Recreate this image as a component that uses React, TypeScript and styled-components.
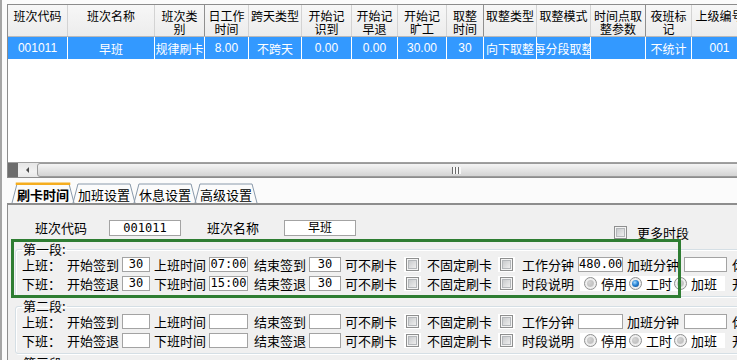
import React from 'react';
import styled, { createGlobalStyle } from 'styled-components';

const GlobalStyle = createGlobalStyle`
  html, body {
    margin: 0;
    padding: 0;
    background: #fbfbfb;
  }
  body {
    font-family: "Noto Sans CJK SC", "Noto Sans", sans-serif;
    font-size: 13px;
    color: #000;
  }
`;

const Window = styled.div`
  width: 737px;
  height: 360px;
  overflow: hidden;
  box-sizing: border-box;
  border-left: 2px solid #a5a5a5;
  padding: 4px 0 0 5px;
  background: #fbfbfb;
`;

const Content = styled.div`
  width: 830px;
`;

/* ---------- grid ---------- */

const Grid = styled.div`
  border: 1px solid #8c8c8c;
  background: #fff;
`;

const HeaderRow = styled.div`
  display: flex;
  height: 32px;
  box-sizing: border-box;
  background: linear-gradient(#f7f7f7, #ececec);
  border-bottom: 1px solid #b9b9b9;
`;

const HeaderCell = styled.div<{ $w: number; $strong?: boolean }>`
  flex: none;
  width: ${p => p.$w}px;
  box-sizing: border-box;
  border-right: 1px solid ${p => (p.$strong ? '#8f8f8f' : '#d3d3d3')};
  padding-top: 4px;
  font-size: 12px;
  line-height: 13px;
  text-align: center;
  white-space: pre-line;
  overflow: hidden;
`;

const DataRow = styled.div`
  display: flex;
  height: 22px;
  background: #3399ff;
  color: #fff;
`;

const DataCell = styled.div<{ $w: number }>`
  flex: none;
  width: ${p => p.$w}px;
  box-sizing: border-box;
  border-right: 1px solid #fff;
  display: flex;
  align-items: center;
  justify-content: center;
  overflow: hidden;
  white-space: nowrap;
  font-family: "Liberation Sans", "Noto Sans CJK SC", sans-serif;
  font-size: 12px;
`;

const GridBody = styled.div`
  height: 103px;
  background: #fff;
`;

const HScroll = styled.div`
  display: flex;
  height: 14px;
  border-top: 1px solid #a0a0a0;
  background: linear-gradient(#e6e6e6, #f1f1f1 60%, #e8e8e8);
  overflow: hidden;
`;

const ScrollCorner = styled.div`
  flex: none;
  width: 10px;
  background: #6d6d6d;
`;

const ScrollArrow = styled.div`
  flex: none;
  width: 19px;
  display: flex;
  align-items: center;
  justify-content: center;

  &::before {
    content: '';
    width: 0;
    height: 0;
    border-top: 3px solid transparent;
    border-bottom: 3px solid transparent;
    border-right: 3px solid #4a4a4a;
  }
`;

const ScrollThumb = styled.div`
  flex: none;
  width: 838px;
  box-sizing: border-box;
  border: 1px solid #9a9a9a;
  border-radius: 3px;
  background: linear-gradient(#f4f4f4, #e4e4e4 50%, #d3d3d3);
  display: flex;
  align-items: center;
  justify-content: center;
`;

const Grip = styled.span`
  width: 9px;
  height: 7px;
  background: repeating-linear-gradient(90deg, #6a6a6a 0 1px, #f8f8f8 1px 3px);
`;

/* ---------- tabs ---------- */

const TabStrip = styled.div`
  display: flex;
  height: 25px;
  box-sizing: border-box;
  padding: 5px 0 0 5px;
`;

const Tab = styled.div<{ $active?: boolean }>`
  position: relative;
  height: 20px;
  padding: 3px 5px 0;
  box-sizing: border-box;
  line-height: 17px;
  font-size: 13px;
  font-weight: ${p => (p.$active ? 700 : 400)};
  white-space: nowrap;

  & + & {
    margin-left: -1px;
  }

  svg {
    position: absolute;
    inset: 0;
    width: 100%;
    height: 100%;
    overflow: visible;
  }

  span {
    position: relative;
  }
`;

/* ---------- panel ---------- */

const Panel = styled.div`
  position: relative;
  height: 160px;
  border-top: 2px solid #8d8d8d;
  border-left: 1px solid #8d8d8d;
  background: #f0f0f0;
  padding-top: 15px;
`;

const TopRow = styled.div`
  display: flex;
  align-items: center;
  height: 16px;
  padding-left: 27px;
  white-space: nowrap;
`;

const Label = styled.span<{ $w?: number; $ml?: number }>`
  flex: none;
  width: ${p => (p.$w ? `${p.$w}px` : 'auto')};
  margin-left: ${p => p.$ml ?? 0}px;
  font-size: 13px;
  line-height: 16px;
  white-space: nowrap;
`;

const TextBox = styled.div<{ $w: number; $h?: number }>`
  flex: none;
  width: ${p => p.$w}px;
  height: ${p => p.$h ?? 15}px;
  box-sizing: border-box;
  border: 1px solid #a3a3a3;
  background: #fff;
  font-size: 12px;
  line-height: ${p => (p.$h ?? 15) - 2}px;
  text-align: center;
  overflow: hidden;
  white-space: nowrap;
  font-family: ${p => (p.$h ? '"DejaVu Sans Mono", "Noto Sans CJK SC", monospace' : '"DejaVu Sans Mono", monospace')};
`;

const CheckBox = styled.span`
  flex: none;
  position: relative;
  display: inline-block;
  width: 13px;
  height: 13px;
  box-sizing: border-box;
  border: 1px solid #8e8f8f;
  background: #f4f4f4;

  &::after {
    content: '';
    position: absolute;
    left: 1px;
    top: 1px;
    width: 9px;
    height: 9px;
    box-sizing: border-box;
    border: 1px solid #b4b7ba;
    background: linear-gradient(135deg, #c9cbcd, #eeeeee);
  }
`;

const CheckCell = styled.div`
  display: flex;
  align-items: center;
`;

const CheckBack = styled.span`
  display: inline-flex;
  align-items: center;
  padding: 1px 2px;
  background: #fff;
`;

const MoreOption = styled.label`
  display: flex;
  align-items: center;
  gap: 10px;
  margin-left: 258px;
  margin-top: 8px;
  font-size: 13px;
`;

const Segment = styled.fieldset`
  margin: 7px 0 0 7px;
  padding: 0 0 3px 6px;
  border: 1px solid #d5dfe5;
  border-radius: 3px;
  box-shadow: inset 1px 1px 0 #fff, 1px 1px 0 #fff;
  min-width: 0;

  & + & {
    margin-top: 3px;
  }

  legend {
    padding: 0 1px;
    font-size: 13px;
    line-height: 12px;
  }
`;

const SegmentRow = styled.div`
  display: grid;
  grid-template-columns: 45px 55px 32px 55px 45px 55px 36px 59px 23px 71px 24px 56px 49px 57px 48px 80px;
  height: 19px;
  align-items: center;
  white-space: nowrap;
`;

const RadioStrip = styled.div`
  grid-column: span 3;
  justify-self: start;
  width: 145px;
  height: 15px;
  margin-left: 2px;
  padding-left: 4px;
  box-sizing: border-box;
  background: #fff;
  display: flex;
  align-items: center;
  gap: 2px;
`;

const RadioItem = styled.span`
  display: inline-flex;
  align-items: center;
  gap: 4px;
  font-size: 13px;
  line-height: 15px;
`;

const Radio = styled.span<{ $checked?: boolean }>`
  position: relative;
  flex: none;
  width: 13px;
  height: 13px;
  box-sizing: border-box;
  border-radius: 50%;
  border: 1px solid #8e8f8f;
  background: radial-gradient(circle, #fdfdfd 0%, #e4e4e4 100%);

  &::after {
    content: '';
    position: absolute;
    left: 2px;
    top: 2px;
    width: 7px;
    height: 7px;
    border-radius: 50%;
    background: ${p =>
      p.$checked
        ? 'radial-gradient(circle at 40% 35%, #a9dcff 0%, #2a86d6 45%, #0c3f80 100%)'
        : 'radial-gradient(circle at 35% 35%, #d4d4d4 0%, #c2c2c2 60%, #e8e8e8 100%)'};
  }
`;

const Highlight = styled.div`
  position: absolute;
  left: 3px;
  top: 34px;
  width: 670px;
  height: 59px;
  box-sizing: border-box;
  border: 3px solid #2e7d32;
  pointer-events: none;
`;

type Column = { w: number; title: string; value: string; strong?: boolean };

const columns: Column[] = [
  { w: 60, title: '班次代码', value: '001011' },
  { w: 87, title: '班次名称', value: '早班' },
  { w: 50, title: '班次类\n别', value: '规律刷卡', strong: true },
  { w: 44, title: '日工作\n时间', value: '8.00' },
  { w: 53, title: '跨天类型', value: '不跨天' },
  { w: 50, title: '开始记\n识到', value: '0.00' },
  { w: 46, title: '开始记\n早退', value: '0.00' },
  { w: 49, title: '开始记\n旷工', value: '30.00' },
  { w: 37, title: '取整\n时间', value: '30', strong: true },
  { w: 53, title: '取整类型', value: '向下取整' },
  { w: 54, title: '取整模式', value: '每分段取整' },
  { w: 55, title: '时间点取\n整参数', value: '', strong: true },
  { w: 46, title: '夜班标\n记', value: '不统计' },
  { w: 56, title: '上级编号', value: '001' },
];

const tabs = ['刷卡时间', '加班设置', '休息设置', '高级设置'];

type SegmentData = {
  title: string;
  inStart: string;
  inTime: string;
  inEnd: string;
  outStart: string;
  outTime: string;
  outEnd: string;
  minutes: string;
  mode?: number;
};

const segments: SegmentData[] = [
  { title: '第一段:', inStart: '30', inTime: '07:00', inEnd: '30', outStart: '30', outTime: '15:00', outEnd: '30', minutes: '480.00', mode: 1 },
  { title: '第二段:', inStart: '', inTime: '', inEnd: '', outStart: '', outTime: '', outEnd: '', minutes: '' },
  { title: '第三段:', inStart: '', inTime: '', inEnd: '', outStart: '', outTime: '', outEnd: '', minutes: '' },
];

const TabShape: React.FC<{ active?: boolean }> = ({ active }) => (
  <svg viewBox="0 0 100 20" preserveAspectRatio="none">
    <polyline
      points="0,20 8,1 92,1 100,20"
      fill="none"
      stroke="#8a9aab"
      strokeWidth="1"
      vectorEffect="non-scaling-stroke"
    />
    {active && (
      <line x1="6" y1="0.8" x2="94" y2="0.8" stroke="#f5ad1f" strokeWidth="2.5" vectorEffect="non-scaling-stroke" />
    )}
  </svg>
);

const Check = () => (
  <CheckCell>
    <CheckBack>
      <CheckBox />
    </CheckBack>
  </CheckCell>
);

const SegmentBox: React.FC<{ data: SegmentData }> = ({ data }) => (
  <Segment>
    <legend>{data.title}</legend>
    <SegmentRow>
      <Label>上班：</Label>
      <Label>开始签到</Label>
      <TextBox $w={28}>{data.inStart}</TextBox>
      <Label>上班时间</Label>
      <TextBox $w={39}>{data.inTime}</TextBox>
      <Label>结束签到</Label>
      <TextBox $w={32}>{data.inEnd}</TextBox>
      <Label>可不刷卡</Label>
      <Check />
      <Label>不固定刷卡</Label>
      <Check />
      <Label>工作分钟</Label>
      <TextBox $w={45}>{data.minutes}</TextBox>
      <Label>加班分钟</Label>
      <TextBox $w={43} />
      <Label>休息分钟</Label>
    </SegmentRow>
    <SegmentRow>
      <Label>下班：</Label>
      <Label>开始签退</Label>
      <TextBox $w={28}>{data.outStart}</TextBox>
      <Label>下班时间</Label>
      <TextBox $w={39}>{data.outTime}</TextBox>
      <Label>结束签退</Label>
      <TextBox $w={32}>{data.outEnd}</TextBox>
      <Label>可不刷卡</Label>
      <Check />
      <Label>不固定刷卡</Label>
      <Check />
      <Label>时段说明</Label>
      <RadioStrip>
        {['停用', '工时', '加班'].map((t, i) => (
          <RadioItem key={t}>
            <Radio $checked={data.mode === i} />
            {t}
          </RadioItem>
        ))}
      </RadioStrip>
      <Label>开始时间</Label>
    </SegmentRow>
  </Segment>
);

export default function App() {
  return (
    <>
      <GlobalStyle />
      <Window>
        <Content>
          <Grid>
            <HeaderRow>
              {columns.map(c => (
                <HeaderCell key={c.title} $w={c.w} $strong={c.strong}>
                  {c.title}
                </HeaderCell>
              ))}
            </HeaderRow>
            <DataRow>
              {columns.map(c => (
                <DataCell key={c.title} $w={c.w}>
                  {c.value}
                </DataCell>
              ))}
            </DataRow>
            <GridBody />
            <HScroll>
              <ScrollCorner />
              <ScrollArrow />
              <ScrollThumb>
                <Grip />
              </ScrollThumb>
            </HScroll>
          </Grid>

          <TabStrip>
            {tabs.map((t, i) => (
              <Tab key={t} $active={i === 0}>
                <TabShape active={i === 0} />
                <span>{t}</span>
              </Tab>
            ))}
          </TabStrip>

          <Panel>
            <TopRow>
              <Label $w={74}>班次代码</Label>
              <TextBox $w={72} $h={16}>001011</TextBox>
              <Label $w={77} $ml={26}>班次名称</Label>
              <TextBox $w={72} $h={16}>早班</TextBox>
              <MoreOption>
                <CheckBox />
                更多时段
              </MoreOption>
            </TopRow>
            {segments.map(s => (
              <SegmentBox key={s.title} data={s} />
            ))}
            <Highlight />
          </Panel>
        </Content>
      </Window>
    </>
  );
}
